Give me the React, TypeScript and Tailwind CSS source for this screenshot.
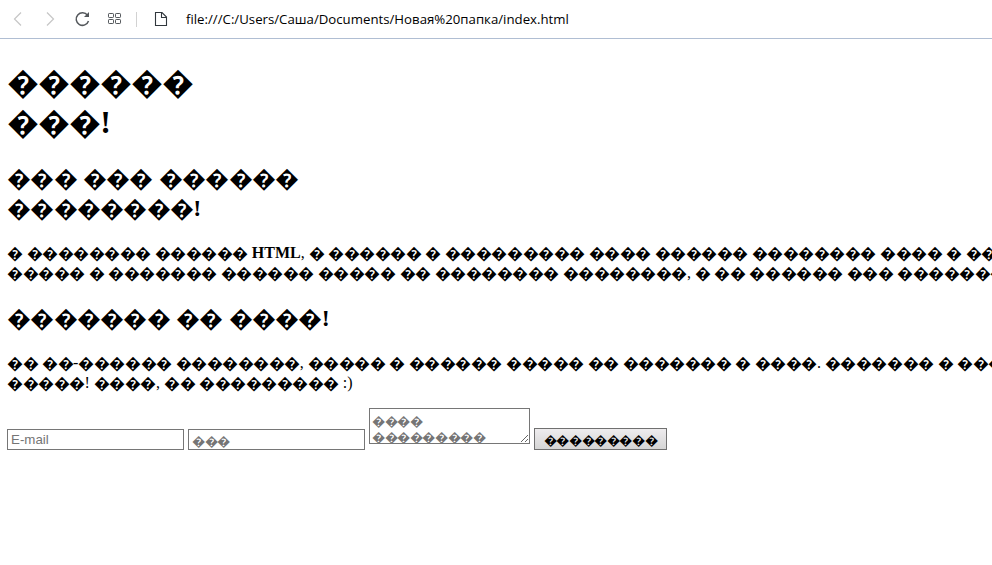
function text(pattern: string) {
  return pattern.replace(/\d+/g, (n) => '\uFFFD'.repeat(Number(n)));
}

// Digits in a pattern stand for runs of replacement characters.
function Garbled({ children }: { children: string }) {
  return (
    <>
      {children.split(/(\d+)/).map((part, i) =>
        i % 2 ? (
          <span
            key={i}
            className="relative top-[0.04em] font-['Noto_Sans_CJK_JP',sans-serif] font-normal leading-none tracking-[-0.03em]"
          >
            {text(part)}
          </span>
        ) : (
          part
        ),
      )}
    </>
  );
}

function Toolbar() {
  return (
    <header className="flex h-[39px] shrink-0 items-center border-b border-[#b0bed3] bg-white">
      <svg className="h-[38px] w-[180px] shrink-0" viewBox="0 0 180 38" fill="none">
        <path d="M21 12.5 14.5 19l6.5 6.500M47 12.500l6.500 6.500-6.500 6.500" stroke="#c6c6c6" strokeWidth="1.2" />
        <path d="M87.5 15.2A6.300 6.300 0 1 0 88.500 21" stroke="#53575b" strokeWidth="1.5" />
        <path d="M89 12v5h-5z" fill="#53575b" />
        <g stroke="#53575b" strokeWidth="1">
          <rect x="108.5" y="13.5" width="5" height="4" rx=".7" />
          <rect x="115.5" y="13.5" width="5" height="4" rx=".7" />
          <rect x="108.5" y="19.5" width="5" height="4" rx=".7" />
          <rect x="115.5" y="19.5" width="5" height="4" rx=".7" />
        </g>
        <path d="M136.5 12v15" stroke="#d2d2d2" />
        <path d="M156 12.5h6l4.500 4.500v8.500h-11v-13h.5M161.500 12.500v5h5" stroke="#30373d" strokeWidth="1.1" />
      </svg>
      <span className="ml-[6px] whitespace-nowrap font-['Open_Sans','Noto_Sans',sans-serif] text-[13.23px] leading-[18px] text-black">
        file:///C:/Users/Саша/Documents/Новая%20папка/index.html
      </span>
    </header>
  );
}

export default function App() {
  return (
    <div className="h-[565px] w-[992px] overflow-hidden bg-white font-['Liberation_Serif',serif] text-black">
      <Toolbar />
      <main className="whitespace-pre pl-[7px] pt-[23px]">
        <h1 className="text-[32px] font-bold leading-[40px]"><Garbled>{'6\n3!'}</Garbled></h1>
        <h2 className="mt-[21px] text-[24px] font-bold leading-[30px]"><Garbled>{'3 3 6\n8!'}</Garbled></h2>
        <p className="mt-5 text-[16px] leading-[20px]">
          <Garbled>{'1 8 6 '}</Garbled><b>HTML</b><Garbled>{', 1 6 1 9 4 6 8 4 1 4\n5 1 7 6 5 2 8 8, 1 2 6 3 8'}</Garbled>
        </p>
        <h2 className="mt-5 text-[24px] font-bold leading-[30px]"><Garbled>{'7 2 4!'}</Garbled></h2>
        <p className="mt-5 text-[16px] leading-[20px]"><Garbled>{'2 2-6 8, 5 1 6 5 2 7 1 4. 7 1 5\n5! 4, 2 9 :)'}</Garbled></p>
        <form className="mt-[15px] flex items-start font-['Liberation_Sans',sans-serif] text-[13.333px]">
          <input placeholder="E-mail" className="mt-[21px] h-[21px] w-[177px] border border-[#767676] px-[3px] placeholder:text-[#757575]" />
          <input placeholder={text('3')} className="ml-1 mt-[21px] h-[21px] w-[177px] border border-[#767676] px-[3px] pt-[1px] font-['Noto_Sans_CJK_JP',sans-serif] tracking-[-0.03em] placeholder:text-[#757575]" />
          <textarea placeholder={text('4\n9')} className="ml-1 h-[36px] w-[161px] resize overflow-hidden border border-[#767676] px-[2px] pt-[4px] font-['Noto_Sans_CJK_JP',sans-serif] leading-[16px] tracking-[-0.03em] placeholder:text-[#757575]" />
          <button type="button" className="ml-1 mt-[20px] h-[22px] w-[133px] border border-[#707070] bg-linear-to-b from-[#eeecee] to-[#d5d5d5] pt-[2px] text-center font-['Noto_Sans_CJK_JP',sans-serif] leading-[18px] tracking-[-0.03em]">{text('9')}</button>
        </form>
      </main>
    </div>
  );
}
